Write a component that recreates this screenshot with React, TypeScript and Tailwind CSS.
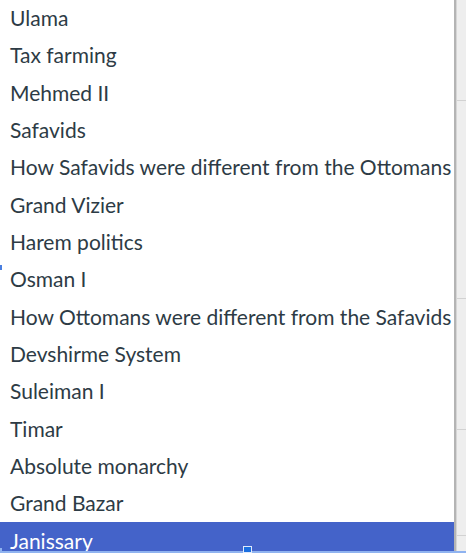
const options = [
  "Ulama",
  "Tax farming",
  "Mehmed II",
  "Safavids",
  "How Safavids were different from the Ottomans",
  "Grand Vizier",
  "Harem politics",
  "Osman I",
  "How Ottomans were different from the Safavids",
  "Devshirme System",
  "Suleiman I",
  "Timar",
  "Absolute monarchy",
  "Grand Bazar",
  "Janissary",
]

const selected = "Janissary"

export default function App() {
  return (
    <div className="relative w-[466px] h-[553px] overflow-hidden bg-white font-['Lato',sans-serif]">
      <div className="flex h-full">
        {/* dropdown list */}
        <div className="w-[456px] shrink-0 border-r-2 border-[#b4b4b4] bg-white">
          <ul className="-mt-[1px]">
            {options.map((opt) => (
              <li
                key={opt}
                className={
                  opt === selected
                    ? "h-[37.33px] flex items-center pl-[10px] text-[21px] whitespace-nowrap bg-[#4463c9] text-white"
                    : "h-[37.33px] flex items-center pl-[10px] text-[21px] whitespace-nowrap text-[#2d3b45]"
                }
              >
                {opt}
              </li>
            ))}
          </ul>
        </div>

        {/* page behind the dropdown */}
        <div className="flex-1 flex flex-col bg-[#eeeeee] border-l border-[#d6d6d6]">
          <div className="h-[101px] border-b border-[#d2d2d2]" />
          <div className="h-[198px] border-b border-[#d2d2d2]" />
          <div className="h-[131px] border-b border-[#d2d2d2]" />
          <div className="h-[106px] border-b border-[#d2d2d2]" />
        </div>
      </div>

      {/* editor selection frame */}
      <div className="absolute left-0 right-0 bottom-0 h-[2px] bg-[#8fb3f0]" />
      <div className="absolute left-0 top-[265px] w-[2px] h-[5px] bg-[#4a7fe0]" />
      <div className="absolute left-0 bottom-0 w-[2px] h-[5px] bg-[#8fb3f0]" />
      <div className="absolute left-[243px] bottom-0 w-[9px] h-[7px] bg-[#1a6fe0] border border-[#dfe9fb]" />
    </div>
  )
}
